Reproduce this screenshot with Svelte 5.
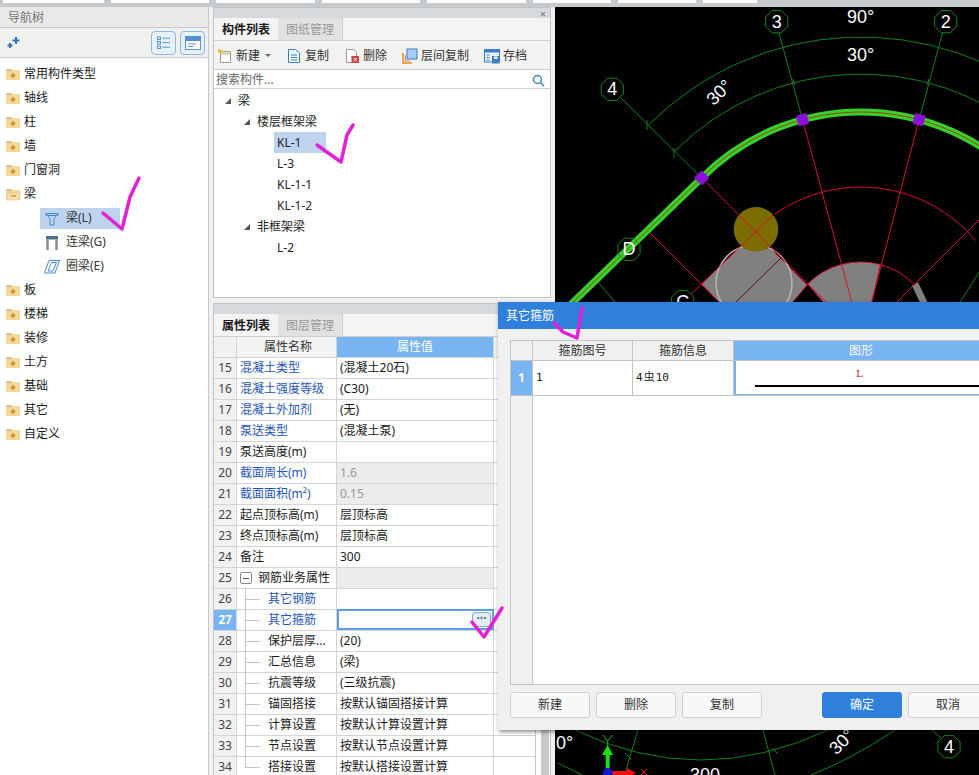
<script>
  const navTop = ['常用构件类型', '轴线', '柱', '墙', '门窗洞']
  const navBottom = ['板', '楼梯', '装修', '土方', '基础', '其它', '自定义']

  const tools = [
    { id: 'new', label: '新建', caret: true },
    { id: 'copy', label: '复制' },
    { id: 'del', label: '删除' },
    { id: 'floor', label: '层间复制' },
    { id: 'save', label: '存档' }
  ]

  const tree = [
    { label: '梁', level: 0, arrow: true },
    { label: '楼层框架梁', level: 1, arrow: true },
    { label: 'KL-1', level: 2, on: true },
    { label: 'L-3', level: 2 },
    { label: 'KL-1-1', level: 2 },
    { label: 'KL-1-2', level: 2 },
    { label: '非框架梁', level: 1, arrow: true },
    { label: 'L-2', level: 2 }
  ]

  const rows = [
    { n: 15, name: '混凝土类型', value: '(混凝土20石)', link: true },
    { n: 16, name: '混凝土强度等级', value: '(C30)', link: true },
    { n: 17, name: '混凝土外加剂', value: '(无)', link: true },
    { n: 18, name: '泵送类型', value: '(混凝土泵)', link: true },
    { n: 19, name: '泵送高度(m)', value: '' },
    { n: 20, name: '截面周长(m)', value: '1.6', link: true, off: true },
    { n: 21, name: '截面面积(m²)', value: '0.15', link: true, off: true },
    { n: 22, name: '起点顶标高(m)', value: '层顶标高' },
    { n: 23, name: '终点顶标高(m)', value: '层顶标高' },
    { n: 24, name: '备注', value: '300' },
    { n: 25, name: '钢筋业务属性', value: '', group: true },
    { n: 26, name: '其它钢筋', value: '', link: true, child: true },
    { n: 27, name: '其它箍筋', value: '', link: true, child: true, active: true },
    { n: 28, name: '保护层厚...', value: '(20)', child: true },
    { n: 29, name: '汇总信息', value: '(梁)', child: true },
    { n: 30, name: '抗震等级', value: '(三级抗震)', child: true },
    { n: 31, name: '锚固搭接', value: '按默认锚固搭接计算', child: true },
    { n: 32, name: '计算设置', value: '按默认计算设置计算', child: true },
    { n: 33, name: '节点设置', value: '按默认节点设置计算', child: true },
    { n: 34, name: '搭接设置', value: '按默认搭接设置计算', child: true, last: true }
  ]

  // drawing centre of the curved beam, page coordinates
  const cx = 860.8
  const cy = 337

  function pt(r, deg) {
    const a = (deg * Math.PI) / 180
    return [cx + r * Math.sin(a), cy - r * Math.cos(a)]
  }

  function arc(r, a0, a1) {
    const p = pt(r, a0)
    const q = pt(r, a1)
    return `M${p[0]} ${p[1]}A${r} ${r} 0 0 1 ${q[0]} ${q[1]}`
  }

  function octagon(x, y, r = 12) {
    const out = []
    for (let i = 0; i < 8; i++) {
      const a = ((i * 45 + 22.5) * Math.PI) / 180
      out.push(`${x + r * Math.cos(a)},${y + r * Math.sin(a)}`)
    }
    return out.join(' ')
  }

  const axes = [
    { x: 612.3, y: 89.3, t: '4' },
    { x: 776.7, y: 21.7, t: '3' },
    { x: 945.7, y: 21.7, t: '2' },
    { x: 629, y: 249.3, t: 'D' },
    { x: 682.7, y: 301.7, t: 'C' },
    { x: 949, y: 746.7, t: '4' }
  ]
  const joints = [
    { p: pt(225, -45), a: -45 },
    { p: pt(225, -15), a: -15 },
    { p: pt(225, 15), a: 15 }
  ]
  const beam = `M566 309L${pt(225, -45).join(' ')}` + arc(225, -45, 50).replace(/^M[^A]+/, '')
</script>

{#snippet folder(open)}
  <svg class="folder" width="16" height="14" viewBox="0 0 16 14">
    <path d="M1 2h5l1.500 1.500H15V13H1z" fill="#e3c27c" />
    <path d="M1 4h14v9H1z" fill="#f2d798" />
    {#if open}
      <path d="M3 6h12.500L14 13H1z" fill="#f6e2ae" stroke="#d9b768" stroke-width=".5" />
      <path d="M6 9h5" stroke="#b98a2e" stroke-width="1.200" />
    {:else}
      <path d="M8 6v5M5.500 8.500h5" stroke="#c08f2d" stroke-width="1.500" />
    {/if}
  </svg>
{/snippet}

{#snippet tool(id)}
  <svg width="16" height="16" viewBox="0 0 16 16" fill="none">
    {#if id === 'new'}
      <path d="M3.500 3.500H13.500V14.500H3.500z" fill="#fff" stroke="#9a9a9a" />
      <path d="M3.500 3.500H13.500V6H3.500z" fill="#e9dcb8" stroke="#a59a78" stroke-width=".6" />
      <circle cx="3" cy="3" r="2" fill="#f2b632" />
    {:else if id === 'copy'}
      <path d="M2.500 1.500H9.500L13.500 5V14.500H2.500z" fill="#eef5fc" stroke="#3a7fc4" />
      <path d="M5 7h6M5 9.500h6M5 12h6" stroke="#3a7fc4" />
    {:else if id === 'del'}
      <path d="M2.500 1.500H9.500L12.500 4.500V14.500H2.500z" fill="#fff" stroke="#9a9a9a" />
      <rect x="7.500" y="8" width="7.500" height="7" fill="#c8443e" />
      <path d="M9.500 9.800l3.500 3.500M13 9.800l-3.500 3.500" stroke="#fff" />
    {:else if id === 'floor'}
      <path d="M1 5v10h9" stroke="#e28a2b" stroke-width="1.500" />
      <path d="M3.500 7v6h5" stroke="#e28a2b" />
      <rect x="5" y="1" width="10" height="10" fill="#a8cdf2" stroke="#3a7fc4" />
    {:else}
      <rect x=".5" y="1.500" width="15" height="12.500" fill="#eaf2fb" stroke="#3a7fc4" />
      <rect x=".5" y="1.500" width="15" height="3" fill="#3a7fc4" />
      <path d="M2.500 7h3M2.500 9.500h3M2.500 12h3" stroke="#3a7fc4" />
      <rect x="8" y="8" width="7.500" height="7.500" fill="#3a7fc4" />
      <rect x="10" y="8.500" width="3.500" height="2.500" fill="#fff" />
    {/if}
  </svg>
{/snippet}

<div class="shell">
  <div class="strip">
    <i style="width:101px"></i><i style="width:98px"></i><i style="width:99px"></i><i style="width:98px"></i><i style="width:99px"></i>
    <i style="width:78px"></i><i style="width:78px"></i><i style="width:54px"></i>
  </div>

  <div class="work">
    <aside class="nav">
      <div class="nav-title">导航树</div>
      <div class="nav-tools">
        <svg class="spark" width="16" height="14" viewBox="0 0 16 14">
          <path d="M10 1v7M6.500 4.500h7" stroke="#3a72b8" stroke-width="2" />
          <path d="M4 7v5M1.500 9.500h5" stroke="#3a72b8" stroke-width="2" />
        </svg>
        <span class="grow"></span>
        <button class="mode" aria-label="列表">
          <svg width="14" height="14" viewBox="0 0 14 14" fill="none" stroke="#5b93cf">
            <rect x=".5" y="1" width="3" height="2.500" /><rect x=".5" y="5.500" width="3" height="2.500" /><rect x=".5" y="10" width="3" height="2.500" />
            <path d="M5.500 2.200H13M5.500 6.700H13M5.500 11.200H13" />
          </svg>
        </button>
        <button class="mode" aria-label="窗口">
          <svg width="16" height="14" viewBox="0 0 16 14">
            <rect x=".5" y=".5" width="15" height="13" fill="#fff" stroke="#5b93cf" />
            <rect x="1" y="1" width="14" height="4" fill="#4f8fd0" />
            <path d="M3 8h8M3 10.500h5" stroke="#5b93cf" />
          </svg>
        </button>
      </div>
      <div class="nav-list">
        {#each navTop as item}
          <div class="nav-row">{@render folder(false)}<span>{item}</span></div>
        {/each}
        <div class="nav-row">{@render folder(true)}<span>梁</span></div>
        <div class="nav-sub on">
          <svg width="16" height="16" viewBox="0 0 16 16" fill="none" stroke="#4a8ac8">
            <path d="M2 2.500H14L10 8V14H6V8z" /><path d="M2 2.500h12v2H2z" fill="#a9cdee" />
          </svg>
          <span>梁(L)</span>
        </div>
        <div class="nav-sub">
          <svg width="16" height="16" viewBox="0 0 16 16" fill="none">
            <rect x="2" y="1" width="12" height="3.500" fill="#4d7196" />
            <path d="M3.500 4.500V15M12.500 4.500V15" stroke="#8c8c8c" stroke-width="2.500" />
          </svg>
          <span>连梁(G)</span>
        </div>
        <div class="nav-sub">
          <svg width="16" height="16" viewBox="0 0 16 16" fill="none" stroke="#4a8ac8">
            <path d="M5 1.500H15.500L11 14H.5z" /><path d="M7.500 3.500h5L9 12H4z" />
          </svg>
          <span>圈梁(E)</span>
        </div>
        {#each navBottom as item}
          <div class="nav-row">{@render folder(false)}<span>{item}</span></div>
        {/each}
      </div>
    </aside>

    <section class="mid">
      <div class="panel list-panel">
        <div class="grip"><span>×</span></div>
        <div class="tabs">
          <span class="tab on">构件列表</span>
          <span class="tab">图纸管理</span>
        </div>
        <div class="toolbar">
          {#each tools as t}
            <span class="tool">
              {@render tool(t.id)}
              <span>{t.label}</span>
              {#if t.caret}<b class="caret"></b>{/if}
            </span>
          {/each}
          <span class="grow"></span>
          <span class="more">▸▸</span>
        </div>
        <div class="search">
          <span>搜索构件...</span>
          <svg width="13" height="13" viewBox="0 0 13 13" fill="none" stroke="#3f86c9" stroke-width="1.500">
            <circle cx="5.500" cy="5.500" r="4" /><path d="M8.500 8.500l3.500 3.500" />
          </svg>
        </div>
        <div class="tree">
          {#each tree as node}
            <div class="node lv{node.level}">
              {#if node.arrow}<b class="tri"></b>{/if}
              <span class:on={node.on}>{node.label}</span>
            </div>
          {/each}
        </div>
      </div>

      <div class="panel props">
        <div class="grip"></div>
        <div class="tabs">
          <span class="tab on">属性列表</span>
          <span class="tab">图层管理</span>
        </div>
        <div class="sheet">
          <div class="table">
            <div class="row head">
              <div class="num"></div>
              <div class="name">属性名称</div>
              <div class="val">属性值</div>
              <div class="spare"></div>
            </div>
            {#each rows as r}
              <div class="row">
                <div class="num" class:active={r.active}>{r.n}</div>
                <div class="name" class:link={r.link}>
                  {#if r.group}<b class="box"></b>{/if}
                  {#if r.child}<i class="branch" class:last={r.last}></i>{/if}
                  <span>{r.name}</span>
                </div>
                <div class="val" class:off={r.off} class:fill={r.group} class:active={r.active}>
                  {r.value}
                  {#if r.active}<b class="dots">···</b>{/if}
                </div>
                <div class="spare"></div>
              </div>
            {/each}
          </div>
          <div class="scroll"></div>
        </div>
      </div>
    </section>

    <div class="canvas">
      <svg width="424" height="768" viewBox="555 7 424 768" fill="none">
        <rect x="555" y="7" width="424" height="768" fill="#000" />

        <!-- slab pieces -->
        <path d={`M${pt(75, -45).join(' ')}A75 75 0 0 1 ${pt(75, 15).join(' ')}L871 305H826z`} fill="#808080" stroke="#d8203c" />
        <path d="M701.700 284L740 247Q756 252 770 248L807 285L790 305H722z" fill="#808080" stroke="#d8203c" />
        <circle cx="754" cy="283" r="38" stroke="#b5b5b5" stroke-width="1.500" />
        <path d="M736 302L781 258" stroke="#5a1018" />
        <path d="M915 284L925 305" stroke="#808080" stroke-width="7" />
        <circle cx="756" cy="229.300" r="22.300" fill="#7b6d00" />

        <!-- red axis lines -->
        <g stroke="#d8102c">
          <path d={`M${pt(225, -45).join(' ')}L826 302`} />
          <path d={`M${pt(225, -15).join(' ')}L851.700 302`} />
          <path d={`M${pt(225, 15).join(' ')}L871.700 302`} />
          <path d="M979 220L897 302" />
          <path d="M650 233L735 318" />
          <path d="M683 302L773 215" />
          <path d={arc(150, -35, 50)} />
          <path d={arc(75, 15, 46)} />
        </g>

        <!-- dimension lines -->
        <g stroke="#11801a">
          <path d={arc(300, -45, 40)} />
          <path d={arc(263, -45, 40)} />
          <path d="M621 98L701.700 178" />
          <path d="M779 33L802.600 120" />
          <path d="M942.500 33L919 120" />
          <path d="M647 120v10M674 148v10M793 79l2 6M929 79l-2 6" />
          <path d="M596 280L615 302" />
          <path d="M1000 240L960 302" />
          <path d="M575 730Q700 790 828 730" />
          <path d="M895 730Q850 760 811 775" />
          <path d="M558 763L582 775" />
          <path d="M638 730L628 763L625 775" />
          <path d="M763 730L775 775" />
          <path d="M932 730L941 738" />
          <path d="M625 753l6 6M772 748l6 6" />
        </g>

        <!-- beam -->
        <path d={beam} stroke="#36d22c" stroke-width="7" />
        <path d={beam} stroke="#a83a14" stroke-width="1" />
        {#each joints as j}
          <rect x={j.p[0] - 5.500} y={j.p[1] - 5.500} width="11" height="11" rx="1.500" fill="#8a12d8" transform={`rotate(${j.a} ${j.p[0]} ${j.p[1]})`} />
        {/each}

        {#each axes as a}
          <polygon points={octagon(a.x, a.y)} stroke="#0f8a14" fill={a.t === 'D' ? 'none' : '#000'} />
          <text class="cad" x={a.x} y={a.y + 6} text-anchor="middle">{a.t}</text>
        {/each}

        <text class="cad" x="860.700" y="23" text-anchor="middle">90°</text>
        <text class="cad" x="860.700" y="61" text-anchor="middle">30°</text>
        <text class="cad" text-anchor="middle" transform="translate(723.400 96.700) rotate(-45)">30°</text>
        <text class="cad" text-anchor="middle" transform="translate(846 746) rotate(-45)">30°</text>
        <text class="cad" x="556" y="749">0°</text>
        <text class="cad" x="690" y="781">300</text>

        <!-- coordinate marker -->
        <path d="M607.700 771V752" stroke="#18e018" stroke-width="4" />
        <path d="M607.700 745L602 755H613z" fill="#18e018" />
        <path d="M603 735l4.700 6 4.700-6M607.700 741v6" stroke="#18c018" />
        <path d="M611 773H630" stroke="#f01010" stroke-width="4" />
        <path d="M636 773L627 768V778z" fill="#f01010" />
        <circle cx="607.700" cy="773" r="5" fill="#1414c8" />
        <path d="M641 769l6 6M647 769l-6 6" stroke="#f01010" />
      </svg>
    </div>
  </div>

  <div class="dialog">
    <div class="dlg-title">其它箍筋</div>
    <div class="dlg-body">
      <div class="grid">
        <div class="grid-head">
          <div class="gnum"></div>
          <div class="g1">箍筋图号</div>
          <div class="g2">箍筋信息</div>
          <div class="g3">图形</div>
        </div>
        <div class="grid-row">
          <div class="gnum on">1</div>
          <div class="g1">1</div>
          <div class="g2">4<span class="bar">虫</span>10</div>
          <div class="g3 shape"><span>L</span><i></i></div>
        </div>
        <div class="grid-rest"><div class="gnum"></div></div>
      </div>
      <div class="dlg-btns">
        <button>新建</button>
        <button>删除</button>
        <button>复制</button>
        <span class="grow"></span>
        <button class="primary">确定</button>
        <button>取消</button>
      </div>
    </div>
  </div>

  <svg class="ink" width="979" height="775" fill="none" stroke="#e221d6" stroke-width="3.500" stroke-linecap="round" stroke-linejoin="round">
    <path d="M103 213L122 229L130 197L139 178" />
    <path d="M317 145L341 162L347 135L353 125" />
    <path d="M554 323L563 332L577 338L582 308" />
    <path d="M472 622L484 637L502 608" />
  </svg>
</div>

<style>
  :global(body) {
    margin: 0;
    background: #fff;
  }

  .shell {
    position: relative;
    width: 979px;
    height: 775px;
    overflow: hidden;
    display: flex;
    flex-direction: column;
    background: #f1f1f1;
    color: #1a1a1a;
    font: 12px/1 "Noto Sans", "Noto Sans CJK SC", sans-serif;
  }

  .grow {
    flex: 1;
  }

  .strip {
    height: 7px;
    flex: none;
    display: flex;
    gap: 7px;
    padding-left: 3px;
    box-sizing: border-box;
    background: #c6cacd;
  }

  .strip i {
    height: 3px;
    background: #fff;
  }

  .work {
    flex: 1;
    min-height: 0;
    display: flex;
  }

  .nav {
    width: 208px;
    flex: none;
    background: #fff;
    border-right: 1px solid #c8c8c8;
    margin-right: 4px;
  }

  .nav-title {
    height: 20px;
    line-height: 21px;
    padding-left: 8px;
    color: #777;
    background: #e9e9e9;
    border-bottom: 1px solid #c8c8c8;
  }

  .nav-tools {
    height: 29px;
    display: flex;
    align-items: center;
    gap: 4px;
    padding: 0 3px 0 6px;
    background: #f0f0f0;
    border-bottom: 1px solid #c8c8c8;
  }

  .mode {
    width: 25px;
    height: 24px;
    padding: 0;
    display: flex;
    align-items: center;
    justify-content: center;
    border: 1px solid #8db8e2;
    border-radius: 4px;
    background: #e8f0f8;
  }

  .nav-list {
    padding-top: 4px;
    display: flex;
    flex-direction: column;
  }

  .nav-row {
    height: 24px;
    display: flex;
    align-items: center;
    gap: 3px;
    padding-left: 5px;
  }

  .folder {
    flex: none;
  }

  .nav-sub {
    height: 21px;
    width: 80px;
    margin: 2px 0 1px 40px;
    display: flex;
    align-items: center;
    gap: 6px;
    padding-left: 4px;
    box-sizing: border-box;
    color: #333;
  }

  .nav-sub span {
    margin-top: -2px;
  }

  .nav-sub.on {
    background: #bdd3ee;
  }

  .mid {
    width: 338px;
    flex: none;
    margin-right: 4px;
    display: flex;
    flex-direction: column;
    gap: 5px;
  }

  .panel {
    background: #fff;
    border: 1px solid #c4c4c4;
    box-sizing: border-box;
  }

  .list-panel {
    height: 291px;
    flex: none;
  }

  .props {
    flex: 1;
    min-height: 0;
    border-bottom: 0;
  }

  .grip {
    height: 10px;
    background: #d6d9dd;
    display: flex;
    justify-content: flex-end;
    align-items: center;
    padding-right: 4px;
    color: #777;
    font-size: 11px;
  }

  .tabs {
    height: 22px;
    display: flex;
    background: #f4f4f4;
    border-bottom: 1px solid #d0d0d0;
  }

  .tab {
    width: 64px;
    text-align: center;
    line-height: 24px;
    color: #999;
    background: #e2e2e2;
    border-right: 1px solid #d0d0d0;
  }

  .tab.on {
    color: #1a1a1a;
    font-weight: 700;
    background: #f4f4f4;
    border-right: 0;
  }

  .toolbar {
    height: 27px;
    padding: 1px 0 0 3px;
    display: flex;
    align-items: center;
    gap: 15px;
    background: #f2f2f2;
    border-bottom: 1px solid #d0d0d0;
  }

  .tool {
    display: flex;
    flex: none;
    align-items: center;
    gap: 3px;
    color: #333;
    white-space: nowrap;
  }

  .caret {
    width: 0;
    height: 0;
    margin-left: 2px;
    border: 3px solid transparent;
    border-top-color: #666;
    border-bottom: 0;
  }

  .more {
    font-size: 8px;
    color: #666;
    padding-right: 2px;
    letter-spacing: -2px;
  }

  .search {
    height: 16px;
    display: flex;
    align-items: center;
    justify-content: space-between;
    padding: 2px 5px 0 2px;
    color: #666;
    border-bottom: 1px solid #d0d0d0;
  }

  .tree {
    padding-top: 1px;
  }

  .node {
    height: 21px;
    display: flex;
    align-items: center;
    position: relative;
    color: #222;
  }

  .node > span {
    height: 21px;
    line-height: 21px;
    padding-left: 3px;
  }

  .node .on {
    width: 49px;
    background: #bdd3ee;
  }

  .lv0 {
    padding-left: 21px;
  }

  .lv1 {
    padding-left: 40px;
  }

  .lv2 {
    padding-left: 60px;
  }

  .tri {
    position: absolute;
    width: 0;
    height: 0;
    margin-left: -10px;
    border-left: 6px solid transparent;
    border-bottom: 6px solid #555;
  }

  .sheet {
    display: flex;
    background: #fff;
  }

  .table {
    width: 321px;
    flex: none;
    border-right: 1px solid #c8c8c8;
  }

  .row {
    height: 21px;
    display: flex;
    box-sizing: border-box;
    border-bottom: 1px solid #d4d4d4;
  }

  .num {
    width: 22px;
    flex: none;
    text-align: center;
    line-height: 20px;
    color: #444;
    background: #f1f1f1;
    border-right: 1px solid #d4d4d4;
  }

  .num.active {
    color: #fff;
    font-weight: 700;
    background: #78b3f2;
  }

  .name {
    width: 100px;
    flex: none;
    display: flex;
    align-items: center;
    gap: 0;
    padding-left: 3px;
    box-sizing: border-box;
    white-space: nowrap;
    border-right: 1px solid #d4d4d4;
  }

  .name.link {
    color: #1f55b8;
  }

  .box {
    width: 10px;
    height: 10px;
    margin: 0 6px 0 0;
    border: 1px solid #888;
    border-radius: 2px;
    background: linear-gradient(#555, #555) center / 6px 1px no-repeat;
  }

  .branch {
    align-self: stretch;
    width: 14px;
    flex: none;
    margin: -1px 8px -1px 5px;
    border-left: 1px solid #c4c4c4;
    background: linear-gradient(#c4c4c4, #c4c4c4) left center / 100% 1px no-repeat;
  }

  .branch.last {
    margin-bottom: 9px;
    background-position: left bottom;
  }

  .val {
    width: 157px;
    flex: none;
    position: relative;
    box-sizing: border-box;
    padding-left: 3px;
    line-height: 20px;
    white-space: nowrap;
    border-right: 1px solid #d4d4d4;
  }

  .val.off {
    color: #999;
    background: #ececec;
  }

  .val.fill {
    background: #ececec;
  }

  .val.active {
    margin-top: -1px;
    height: 21px;
    outline: 2px solid #5a9ee6;
    outline-offset: -2px;
  }

  .dots {
    position: absolute;
    top: 3px;
    right: 2px;
    width: 17px;
    height: 13px;
    line-height: 10px;
    text-align: center;
    color: #3a6ea8;
    border: 1px solid #8aa6c6;
    border-radius: 3px;
    background: #e3ebf4;
  }

  .spare {
    flex: 1;
  }

  .head {
    height: 21px;
    background: #f1f1f1;
  }

  .head .name {
    justify-content: center;
    color: #333;
    background: #f3f3f3;
  }

  .head .val {
    padding: 0;
    text-align: center;
    color: #fff;
    background: #78b3f2;
  }

  .scroll {
    width: 8px;
    height: 438px;
    margin-left: 5px;
    background: #c9c9c9;
  }

  .canvas {
    flex: 1;
    min-width: 0;
    background: #000;
  }

  .canvas svg {
    display: block;
  }

  .cad {
    fill: #fff;
    stroke: none;
    font: 18px "Liberation Sans", sans-serif;
  }

  .dialog {
    position: absolute;
    left: 498px;
    top: 302px;
    width: 520px;
    height: 428px;
    display: flex;
    flex-direction: column;
    background: #f0f0f0;
    box-shadow: 1px 2px 4px rgba(0, 0, 0, 0.45);
  }

  .dlg-title {
    height: 27px;
    flex: none;
    padding-left: 8px;
    line-height: 27px;
    color: #fff;
    background: #2f7fdc;
  }

  .dlg-body {
    flex: 1;
    min-height: 0;
    display: flex;
    flex-direction: column;
    padding: 11px 12px 12px;
  }

  .grid {
    flex: 1;
    min-height: 0;
    display: flex;
    flex-direction: column;
    background: #fff;
    border: 1px solid #c4c4c4;
    border-right: 0;
  }

  .grid-head {
    height: 20px;
    flex: none;
    box-sizing: border-box;
    display: flex;
    background: #f0f0f0;
    border-bottom: 1px solid #c4c4c4;
    line-height: 20px;
    text-align: center;
    color: #333;
  }

  .grid-row {
    height: 35px;
    flex: none;
    box-sizing: border-box;
    display: flex;
    border-bottom: 1px solid #c4c4c4;
    line-height: 34px;
  }

  .grid-rest {
    flex: 1;
    display: flex;
  }

  .gnum {
    width: 22px;
    flex: none;
    box-sizing: border-box;
    background: #f0f0f0;
    border-right: 1px solid #c4c4c4;
  }

  .gnum.on {
    text-align: center;
    color: #fff;
    font-weight: 700;
    background: #78b3f2;
  }

  .g1,
  .g2 {
    box-sizing: border-box;
    flex: none;
    border-right: 1px solid #c4c4c4;
  }

  .g1 {
    width: 100px;
  }

  .g2 {
    width: 101px;
  }

  .g3 {
    flex: 1;
  }

  .grid-head .g3 {
    color: #fff;
    background: #78b3f2;
    text-align: left;
    padding-left: 115px;
  }

  .grid-row .g1,
  .grid-row .g2 {
    padding-left: 3px;
    text-align: left;
    font-family: "DejaVu Sans Mono", "Noto Sans CJK SC", monospace;
    font-size: 11px;
  }

  .bar {
    font-size: 11px;
    margin: 0 1px;
  }

  .shape {
    display: flex;
    flex-direction: column;
    box-sizing: border-box;
    padding: 0 0 7px 19px;
    border-left: 2px solid #78b3f2;
    border-bottom: 1px solid #78b3f2;
  }

  .shape span {
    flex: 1;
    min-height: 0;
    margin-left: 101px;
    line-height: 26px;
    font-family: "DejaVu Serif", serif;
    font-size: 10px;
    color: #d0102a;
  }

  .shape i {
    height: 2px;
    flex: none;
    background: #000;
  }

  .dlg-btns {
    height: 26px;
    flex: none;
    margin: 7px 18px 0 0;
    display: flex;
    gap: 6px;
  }

  button {
    font: inherit;
    color: #333;
  }

  .dlg-btns button {
    width: 80px;
    height: 26px;
    padding: 0;
    background: #f8f8f8;
    border: 1px solid #cfcfcf;
    border-radius: 3px;
  }

  .dlg-btns .primary {
    color: #fff;
    background: #2f7fdc;
    border-color: #2f7fdc;
  }

  .ink {
    position: absolute;
    left: 0;
    top: 0;
    pointer-events: none;
  }
</style>
